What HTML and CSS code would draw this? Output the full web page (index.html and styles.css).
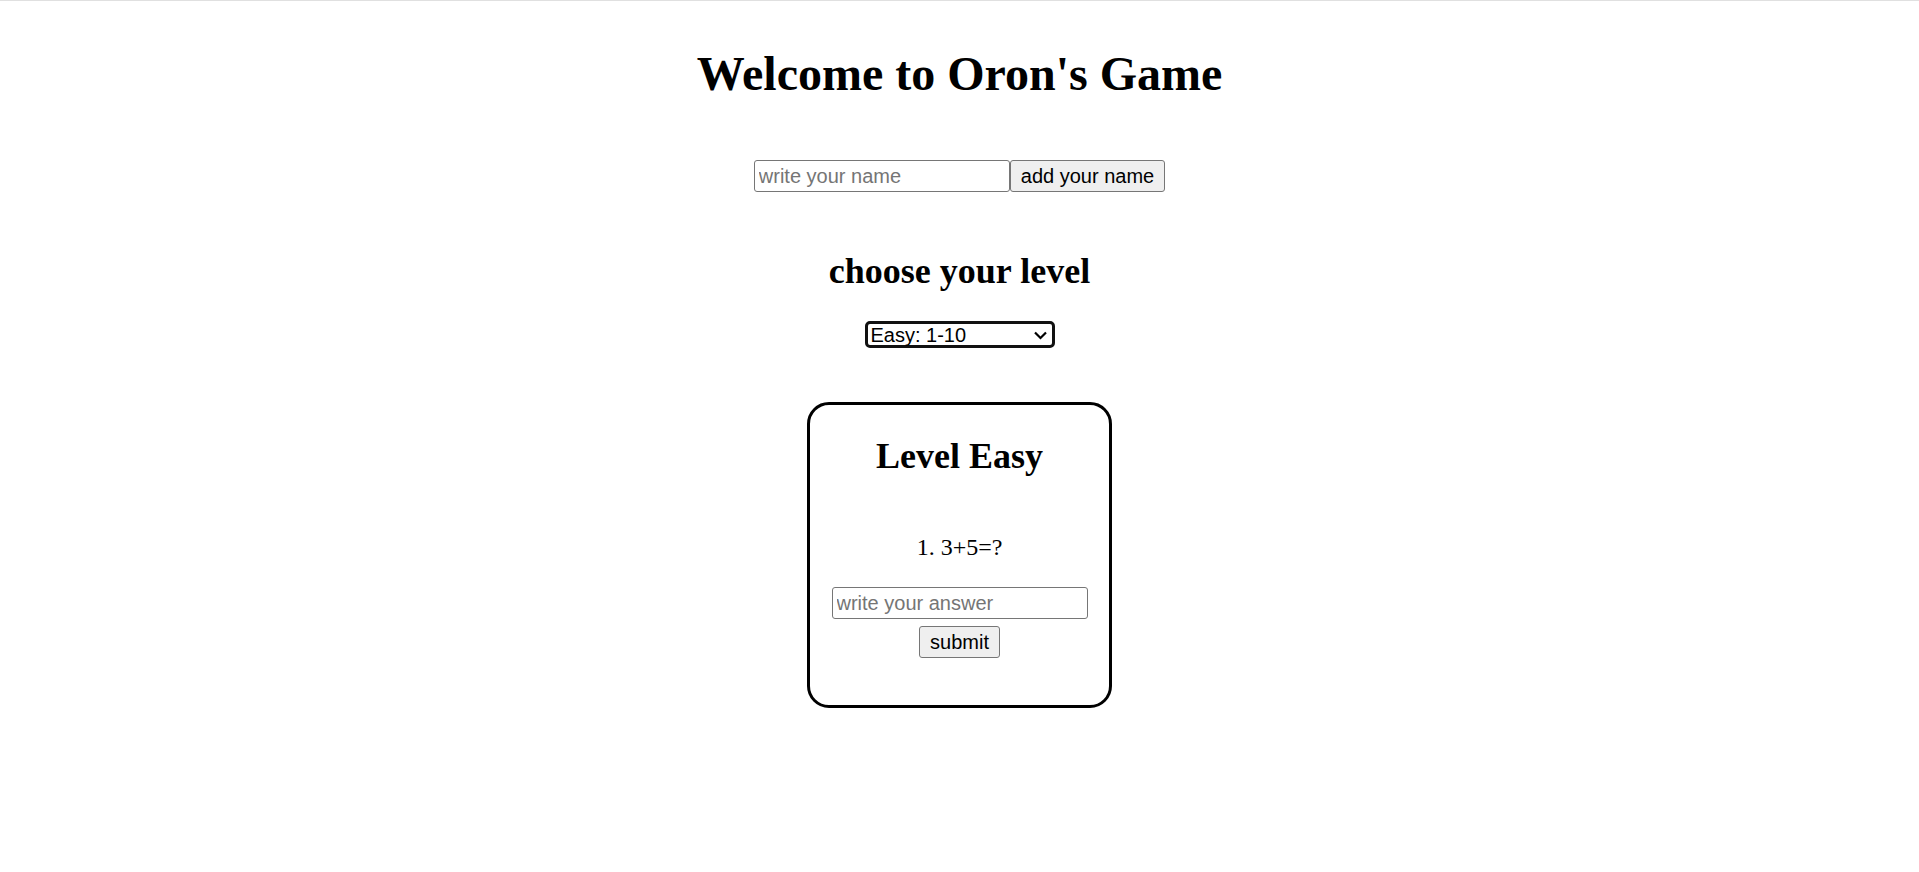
FILE: index.html
```html
<!DOCTYPE html>
<html lang="en">
<head>
<meta charset="utf-8">
<title>Oron's Game</title>
<link rel="stylesheet" href="styles.css">
</head>
<body>
<h1 class="title">Welcome to Oron's Game</h1>
<div class="name-row">
  <input class="field name-input" type="text" placeholder="write your name"><button class="btn">add your name</button>
</div>
<h2 class="level-title">choose your level</h2>
<div class="level-row">
  <div class="select-box">
    <span class="select-text">Easy: 1-10</span>
    <svg class="chev" width="15" height="10" viewBox="0 0 15 10"><path d="M2 2.5 L7.5 8 L13 2.5" fill="none" stroke="#000" stroke-width="2.2"/></svg>
  </div>
</div>
<div class="card">
  <h2 class="card-title">Level Easy</h2>
  <p class="question">1. 3+5=?</p>
  <input class="field answer-input" type="text" placeholder="write your answer">
  <button class="btn submit">submit</button>
</div>
</body>
</html>
```
FILE: styles.css
```css
html {
  border-top: 1px solid #e0e0e0;
}
body {
  margin: 0;
  padding: 0 12px;
  font-family: "Liberation Serif", "Times New Roman", serif;
  text-align: center;
  color: #000;
  background: #fff;
}
.title {
  font-size: 48px;
  font-weight: bold;
  margin: 45px 0 0;
  line-height: 55px;
}
.name-row {
  margin-top: 59px;
  display: flex;
  justify-content: center;
}
.field {
  font-family: "Liberation Sans", Arial, sans-serif;
  font-size: 20px;
  height: 32px;
  box-sizing: border-box;
  padding: 1px 4px;
  border: 1.5px solid #767676;
  border-radius: 3px;
  background: #fff;
  color: #000;
  outline: none;
  margin: 0;
}
.field::placeholder {
  color: #757575;
}
.name-input {
  width: 256px;
}
.btn {
  font-family: "Liberation Sans", Arial, sans-serif;
  font-size: 20px;
  height: 32px;
  box-sizing: border-box;
  padding: 0 10px;
  border: 1.5px solid #767676;
  border-radius: 3px;
  background: #efefef;
  color: #000;
  margin: 0;
}
.level-title {
  font-size: 36px;
  font-weight: bold;
  margin: 0;
  margin-top: 58px;
  line-height: 42px;
}
.level-row {
  display: flex;
  justify-content: center;
  margin-top: 29px;
}
.select-box {
  width: 190px;
  height: 27px;
  box-sizing: border-box;
  border: 3px solid #111;
  border-radius: 5px;
  display: flex;
  align-items: center;
  justify-content: space-between;
  padding: 0 4px 0 3px;
  font-family: "Liberation Sans", Arial, sans-serif;
  font-size: 20px;
  line-height: 20px;
}
.chev {
  display: block;
}
.card {
  width: 305px;
  height: 306px;
  box-sizing: border-box;
  margin: 54px auto 0;
  border: 3px solid #000;
  border-radius: 22px;
  padding: 0 22px;
  display: flex;
  flex-direction: column;
  align-items: center;
}
.card-title {
  font-size: 36px;
  font-weight: bold;
  margin: 30px 0 0;
  line-height: 42px;
}
.question {
  font-size: 24px;
  margin: 56px 0 0;
  line-height: 28px;
}
.answer-input {
  width: 256px;
  margin-top: 26px;
}
.submit {
  margin-top: 7px;
}
```
